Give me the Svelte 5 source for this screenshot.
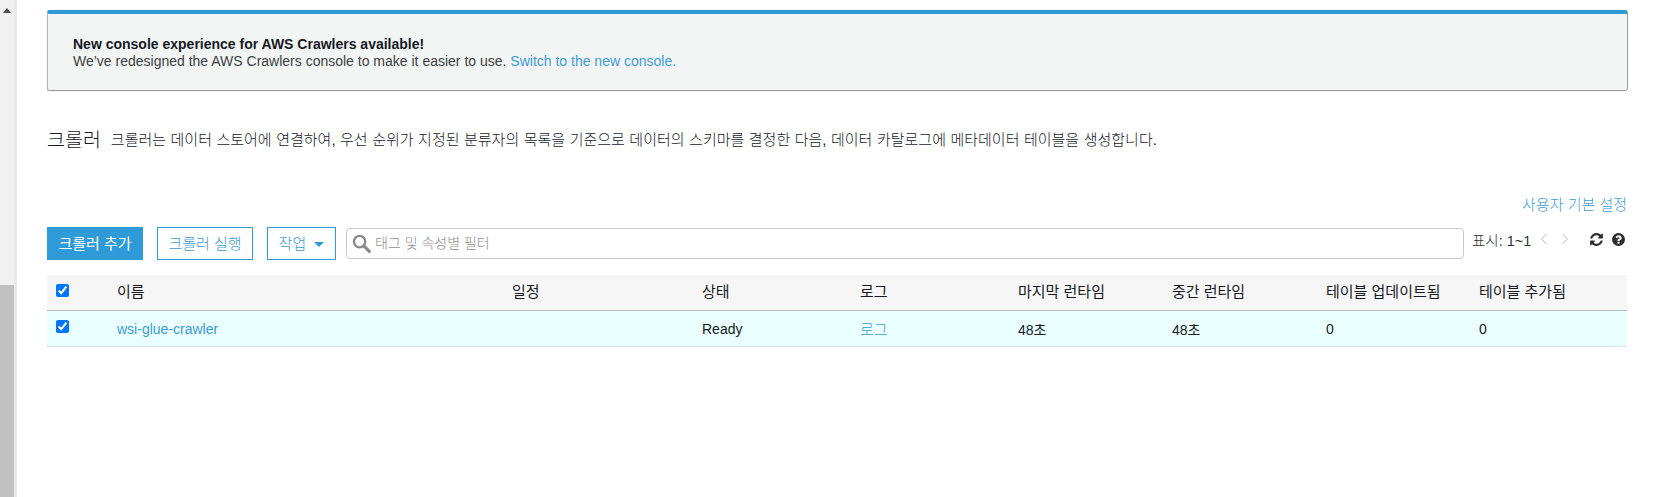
<script>
  const columns = [
    { label: '이름', width: 395 },
    { label: '일정', width: 190 },
    { label: '상태', width: 158 },
    { label: '로그', width: 158 },
    { label: '마지막 런타임', width: 154 },
    { label: '중간 런타임', width: 154 },
    { label: '테이블 업데이트됨', width: 153 },
    { label: '테이블 추가됨', width: 148 }
  ];
</script>

<div class="page">
  <div class="scrollbar">
    <div class="track">
      <span class="arrow"></span>
      <div class="thumb"></div>
    </div>
  </div>

  <main class="content">
    <section class="banner">
      <strong>New console experience for AWS Crawlers available!</strong>
      <p>We’ve redesigned the AWS Crawlers console to make it easier to use. <a href="#new">Switch to the new console.</a></p>
    </section>

    <header class="intro">
      <h1>크롤러</h1>
      <p>크롤러는 데이터 스토어에 연결하여, 우선 순위가 지정된 분류자의 목록을 기준으로 데이터의 스키마를 결정한 다음, 데이터 카탈로그에 메타데이터 테이블을 생성합니다.</p>
    </header>

    <div class="prefs"><a href="#prefs">사용자 기본 설정</a></div>

    <div class="toolbar">
      <button class="btn primary">크롤러 추가</button>
      <button class="btn">크롤러 실행</button>
      <button class="btn action">작업 <span class="caret"></span></button>
      <label class="search">
        <svg viewBox="0 0 18 18" width="19" height="19" aria-hidden="true">
          <circle cx="7.2" cy="7.2" r="5.4" fill="none" stroke="#8a8a8a" stroke-width="2.2" />
          <path d="M11.2 11.2 16.4 16.4" stroke="#8a8a8a" stroke-width="3" stroke-linecap="round" />
        </svg>
        <input placeholder="태그 및 속성별 필터" />
      </label>
      <div class="pager">
        <span class="count">표시: 1~1</span>
        <svg class="chev" viewBox="0 0 8 12" width="8" height="12" aria-hidden="true"><path d="M6.5 1 1.5 6l5 5" /></svg>
        <svg class="chev" viewBox="0 0 8 12" width="8" height="12" aria-hidden="true"><path d="M1.5 1l5 5-5 5" /></svg>
        <svg class="tool refresh" viewBox="0 0 1792 1792" width="15" height="15" aria-hidden="true"><path d="M1639 1056q0 5-1 7-64 268-268 434.5t-478 166.5q-146 0-282.5-55t-243.5-157l-129 129q-19 19-45 19t-45-19-19-45v-448q0-26 19-45t45-19h448q26 0 45 19t19 45-19 45l-137 137q71 66 161 102t187 36q134 0 250-65t186-179q11-17 53-117 8-23 30-23h192q13 0 22.5 9.5t9.5 22.5zm25-800v448q0 26-19 45t-45 19h-448q-26 0-45-19t-19-45 19-45l138-138q-148-137-349-137-134 0-250 65t-186 179q-11 17-53 117-8 23-30 23h-199q-13 0-22.5-9.5t-9.5-22.5v-7q65-268 270-434.5t480-166.5q146 0 284 55.5t245 156.5l130-129q19-19 45-19t45 19 19 45z" /></svg>
        <svg class="tool help" viewBox="0 0 1792 1792" width="15" height="15" aria-hidden="true"><path d="M1024 1376v-192q0-14-9-23t-23-9h-192q-14 0-23 9t-9 23v192q0 14 9 23t23 9h192q14 0 23-9t9-23zm256-672q0-88-55.5-163t-138.5-116-170-41q-243 0-371 213-15 24 8 42l132 100q7 6 19 6 16 0 25-12 53-68 86-92 34-24 86-24 48 0 85.5 26t37.5 59q0 38-20 61t-68 45q-63 28-115.5 86.5t-52.5 125.5v36q0 14 9 23t23 9h192q14 0 23-9t9-23q0-19 21.5-49.5t54.5-49.5q32-18 49-28.5t46-35 44.5-48 28-60.5 12.5-81zm384 192q0 209-103 385.5t-279.5 279.5-385.5 103-385.5-103-279.5-279.5-103-385.5 103-385.5 279.5-279.5 385.5-103 385.5 103 279.5 279.5 103 385.5z" /></svg>
      </div>
    </div>

    <table>
      <colgroup>
        <col class="check-col" />
        {#each columns as c}<col style="width: {c.width}px" />{/each}
      </colgroup>
      <thead>
        <tr>
          <th class="check"><input type="checkbox" checked /></th>
          {#each columns as c}<th>{c.label}</th>{/each}
        </tr>
      </thead>
      <tbody>
        <tr>
          <td class="check"><input type="checkbox" checked /></td>
          <td><a href="#crawler">wsi-glue-crawler</a></td>
          <td></td>
          <td>Ready</td>
          <td><a class="ko" href="#log">로그</a></td>
          <td>48초</td>
          <td>48초</td>
          <td>0</td>
          <td>0</td>
        </tr>
      </tbody>
    </table>
  </main>
</div>

<style>
  :global(body) { margin: 0; background: #fff; }
  .page {
    display: flex; width: 1657px; height: 497px; overflow: hidden; background: #fff; color: #16191f;
    font-family: "Liberation Sans", "Noto Sans CJK KR", Arial, sans-serif; font-size: 14px;
  }
  a { color: #3f9bd5; text-decoration: none; }

  .scrollbar { flex: 0 0 17px; box-sizing: border-box; border-right: 3px solid #e9e9e9; background: #f1f1f1; }
  .track { display: flex; flex-direction: column; align-items: center; height: 100%; }
  .arrow { margin-top: 8px; border: 4px solid transparent; border-top: 0; border-bottom: 5px solid #505050; }
  .thumb { align-self: stretch; margin-top: 272px; flex: 1; background: #c1c1c1; }

  .content { flex: 0 0 1580px; margin-left: 30px; padding-top: 10px; }

  .banner {
    box-sizing: border-box; height: 80px; padding: 21px 24px 0 25px; background: #f3f5f5;
    border-top: 4px solid #2f9ad8; border-left: 1px solid #b5b8b8; border-radius: 2px;
    box-shadow: 0 1px 1px #8f9393, 1px 0 1px #9a9d9d;
    color: #3b3f44;
  }
  .banner strong { display: block; line-height: 18px; color: #16191f; }
  .banner p { margin: 0; line-height: 17px; }

  .intro { display: flex; align-items: center; gap: 10px; margin-top: 35px; height: 26px; }
  .intro h1 { margin: 0; font-size: 19.5px; font-weight: 300; }
  .intro p { margin: 0; font-size: 15px; font-weight: 300; word-spacing: 0.35px; color: #16191f; }

  .prefs { margin-top: 45px; text-align: right; line-height: 18px; font-size: 15px; font-weight: 300; }

  .toolbar { display: flex; align-items: center; margin-top: 13px; height: 33px; }
  .btn {
    box-sizing: border-box; width: 96px; height: 33px; margin-right: 14px; padding: 0 0 3px;
    background: #fff; border: 1px solid #2f9ad8; color: #3f9bd5; font: inherit; font-size: 15px; font-weight: 300;
  }
  .btn.primary { background: #2f9ad8; color: #fff; font-weight: 400; }
  .btn.action { width: 69px; margin-right: 10px; }
  .caret {
    display: inline-block; margin-left: 4px; vertical-align: 2px;
    border: 5px solid transparent; border-bottom: 0; border-top: 5px solid #2f9ad8;
  }

  .search {
    display: flex; align-items: center; gap: 4px; box-sizing: border-box; flex: none; width: 1118px; height: 31px; padding-left: 5px;
    background: #fff; border: 1px solid #c9c9c9; border-radius: 4px;
  }
  .search input { flex: 1; border: 0; outline: 0; padding: 0 0 2px; font: inherit; font-size: 14px; font-weight: 300; }
  .search input::placeholder { color: #8f8f8f; }

  .pager { display: flex; align-items: center; align-self: flex-start; height: 24px; margin-left: 8px; flex: 1; white-space: nowrap; }
  .pager svg { flex: none; }
  .count { font-size: 14.5px; font-weight: 300; color: #333; margin-right: 9px; }
  .chev { margin-right: 13px; }
  .chev path { fill: none; stroke: #d5d5d5; stroke-width: 1.2; }
  .tool { fill: #2d2d2d; }
  .refresh { margin-left: 7px; }
  .help { margin-left: 7px; }

  table { width: 1580px; margin-top: 15px; border-collapse: collapse; table-layout: fixed; }
  .check-col { width: 70px; }
  th {
    height: 35px; padding: 0 0 3px; box-sizing: border-box; text-align: left; font-size: 15px; font-weight: 400;
    background: #f6f6f6; border-bottom: 1px solid #b9bcbf;
  }
  td { height: 36px; padding: 1px 0 0; box-sizing: border-box; font-size: 14px; background: #eaffff; border-bottom: 1px solid #dde3e4; }
  .ko { font-size: 15px; font-weight: 300; }
  th.check { padding: 0 0 0 9px; }
  td.check { padding: 1px 0 0 9px; }
  .check input { display: block; width: 13px; height: 13px; margin: 0 0 4px; }
</style>
